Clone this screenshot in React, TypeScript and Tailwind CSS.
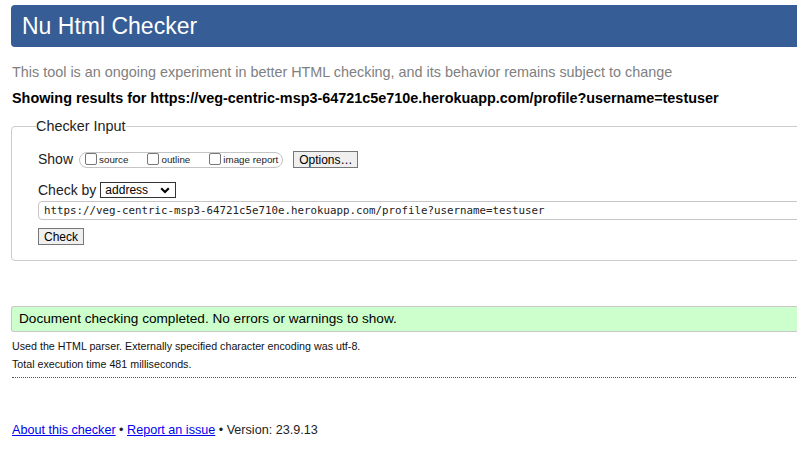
import React from "react";

function Box() {
  return <span className="block w-[12px] h-[12px] self-start border border-[#767676] rounded-[2px] bg-white" />;
}

export default function App() {
  return (
    <div className="w-[797px] h-[452px] overflow-hidden bg-white text-[#111] font-['Liberation_Sans',Arial,sans-serif]">
      <div className="w-[900px] pl-[11px] pt-[5px]">
        <div className="h-[42px] bg-[#365d95] rounded-l-[4px] pl-[11px] flex items-center">
          <h1 className="text-white text-[23px] leading-[27px]">Nu Html Checker</h1>
        </div>

        <p className="mt-[17px] pl-[1px] text-[14.4px] leading-[17px] text-[#808080]">
          This tool is an ongoing experiment in better HTML checking, and its behavior remains subject to change
        </p>

        <p className="mt-[9px] pl-[1px] text-[14.4px] leading-[17px] font-bold text-black">
          Showing results for https://veg-centric-msp3-64721c5e710e.herokuapp.com/profile?username=testuser
        </p>

        <fieldset className="mt-[11px] border border-[#cccccc] rounded-[4px] pl-[26px] pb-[15px]">
          <legend className="-ml-[2px] text-[14.4px] leading-[17px] text-[#222]">Checker Input</legend>

          <div className="mt-[16px] flex items-center h-[17px]">
            <span className="text-[14px] leading-[17px] text-[#222]">Show</span>
            <span className="ml-[6px] flex items-center h-[16px] border border-[#c4c4c4] rounded-full pl-[5px] pr-[4px]">
              <Box />
              <span className="ml-[2px] text-[9.8px] leading-[12px] text-[#222]">source</span>
              <span className="ml-[19px] flex self-stretch"><Box /></span>
              <span className="ml-[2px] text-[9.8px] leading-[12px] text-[#222]">outline</span>
              <span className="ml-[19px] flex self-stretch"><Box /></span>
              <span className="ml-[2px] text-[9.8px] leading-[12px] text-[#222]">image report</span>
            </span>
            <span className="ml-[10px] flex items-center justify-center w-[65px] h-[17px] bg-[#efefef] border border-[#767676] text-[12px] leading-[14px] text-black">
              Options…
            </span>
          </div>

          <div className="mt-[14px] flex items-center h-[16px]">
            <span className="text-[14px] leading-[17px] text-[#222]">Check by</span>
            <span className="ml-[4px] flex items-center justify-between w-[76px] h-[16px] border border-[#333] bg-white pl-[4px] pr-[5px]">
              <span className="text-[12px] leading-[14px] text-black">address</span>
              <svg width="10" height="7" viewBox="0 0 10 7">
                <path d="M1.2 1.3 L5 5 L8.8 1.3" fill="none" stroke="#000" strokeWidth="2.1" />
              </svg>
            </span>
          </div>

          <div className="mt-[3px] h-[19px] border border-[#c6c6c6] rounded-l-[4px] flex items-center pl-[5px]">
            <span className="font-['DejaVu_Sans_Mono','Liberation_Mono',monospace] text-[10.8px] leading-[13px] text-[#222]">
              https://veg-centric-msp3-64721c5e710e.herokuapp.com/profile?username=testuser
            </span>
          </div>

          <div className="mt-[8px] flex">
            <span className="flex items-center justify-center w-[46px] h-[17px] bg-[#efefef] border border-[#767676] text-[12px] leading-[14px] text-black">
              Check
            </span>
          </div>
        </fieldset>

        <div className="mt-[45px] h-[26px] bg-[#ccffcc] border border-r-0 border-[#c8c8c8] rounded-l-[3px] flex items-center pl-[7px]">
          <span className="text-[13.6px] leading-[16px] text-black">
            Document checking completed. No errors or warnings to show.
          </span>
        </div>

        <p className="mt-[6px] pl-[1px] text-[10.7px] leading-[17.7px] text-[#111]">
          Used the HTML parser. Externally specified character encoding was utf-8.
        </p>
        <p className="pl-[1px] text-[10.7px] leading-[17.7px] text-[#111]">Total execution time 481 milliseconds.</p>

        <div className="mt-[4px] ml-[1px] border-t border-dotted border-[#555]" />

        <p className="mt-[45px] pl-[1px] text-[12.6px] leading-[15px] text-[#222]">
          <a href="#" className="text-[#0000ee] underline">About this checker</a>
          {" • "}
          <a href="#" className="text-[#0000ee] underline">Report an issue</a>
          {" • Version: 23.9.13"}
        </p>
      </div>
    </div>
  );
}
